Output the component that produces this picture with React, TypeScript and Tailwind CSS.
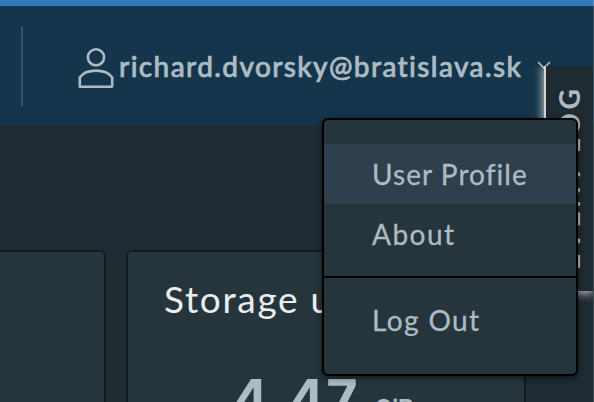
import React from "react";

function UserIcon() {
  return (
    <svg width="36" height="42" viewBox="0 0 36 42" fill="none" stroke="#adbbc4" strokeWidth="2.6" className="shrink-0">
      <circle cx="18" cy="10.3" r="8.1" />
      <path d="M1.8 39.8V30.5C5 25.8 11 23.6 18 23.6S31 25.8 34.2 30.5V38.8Q34.2 39.8 33.2 39.8H2.8Q1.8 39.8 1.8 38.8Z" strokeLinejoin="round" />
    </svg>
  );
}

function Header() {
  return (
    <header className="flex h-[126px] items-start border-t-[6px] border-[#3579b9] bg-[#14354b] pt-5 pl-[21px]">
      <div className="h-20 w-0.5 bg-[#385367]" />
      <div className="flex pt-[21px] pl-[55px]">
        <UserIcon />
        <span className="-mt-px ml-[5px] h-10 w-[404px] text-[28px] leading-10 font-medium tracking-[1.38px] whitespace-nowrap text-[#adbbc4] [-webkit-text-stroke:0.7px_#adbbc4]">
          richard.dvorsky@bratislava.sk
        </span>
        <svg width="14" height="10" viewBox="0 0 14 10" fill="none" stroke="#adbbc4" strokeWidth="1.6" className="mt-[14px] ml-[14px]">
          <path d="M1 1L7 7L13 1" />
        </svg>
      </div>
    </header>
  );
}

function Cards() {
  return (
    <main className="flex gap-5 pt-[124px]">
      <section className="h-[200px] w-[106px] shrink-0 rounded-tr-[6px] border-2 border-l-0 border-[#11191d] bg-[#26343b]" />
      <section className="h-[200px] w-[400px] shrink-0 rounded-[6px] border-2 border-[#11191d] bg-[#26343b]">
        <h2 className="pt-[27px] pl-9 text-[37px] leading-10 tracking-[1.7px] whitespace-nowrap text-[#eaedf0]">Storage usage</h2>
        <div className="flex items-baseline pt-[50px] pl-[104px] font-['Inter',sans-serif] whitespace-nowrap text-[#adbbc4]">
          <span className="w-[128px] text-[54px] leading-[60px] font-bold tracking-[1.7px]">4.47</span>
          <span className="ml-[14px] text-[25px] font-semibold tracking-[-0.8px]">GiB</span>
        </div>
      </section>
    </main>
  );
}

function EventLog() {
  return (
    <aside className="absolute top-[66px] left-[544px] flex h-[225px] w-[49px] border-l-2 border-[#d8d5ce] bg-[#1e2b33] shadow-[0_1px_9px_1px_#c9c5bd] [clip-path:inset(0_0_-12px_-12px)]">
      <span className="mt-[15px] ml-[7px] h-[189px] w-[32px] rotate-180 text-[28px] leading-8 font-bold tracking-[3.5px] whitespace-nowrap text-[#adbbc4] [writing-mode:vertical-rl]">
        EVENT LOG
      </span>
    </aside>
  );
}

function UserMenu() {
  return (
    <nav className="absolute top-[118px] left-[322px] h-[258px] w-[256px] rounded-[6px] border-2 border-black bg-[#26343b] pt-6 text-[28px] tracking-[1.05px] text-[#adbbc4] shadow-[0_2px_6px_rgba(0,0,0,0.5)] [-webkit-text-stroke:0.3px_#adbbc4]">
      <a className="block h-[60px] bg-[#2e3f4d] pl-12 leading-[60px]">User Profile</a>
      <a className="block h-[60px] pl-12 tracking-[1.5px] leading-[60px]">About</a>
      <div className="mt-3 border-t-2 border-black" />
      <a className="mt-3 block h-[60px] pl-12 tracking-[1.4px] leading-[60px]">Log Out</a>
    </nav>
  );
}

export default function App() {
  return (
    <div className="relative h-[402px] w-[594px] overflow-hidden bg-[#1e2b33] font-['Lato',sans-serif]">
      <Header />
      <Cards />
      <EventLog />
      <UserMenu />
      <div className="absolute top-0 right-0 h-full w-px bg-white/15" />
    </div>
  );
}
